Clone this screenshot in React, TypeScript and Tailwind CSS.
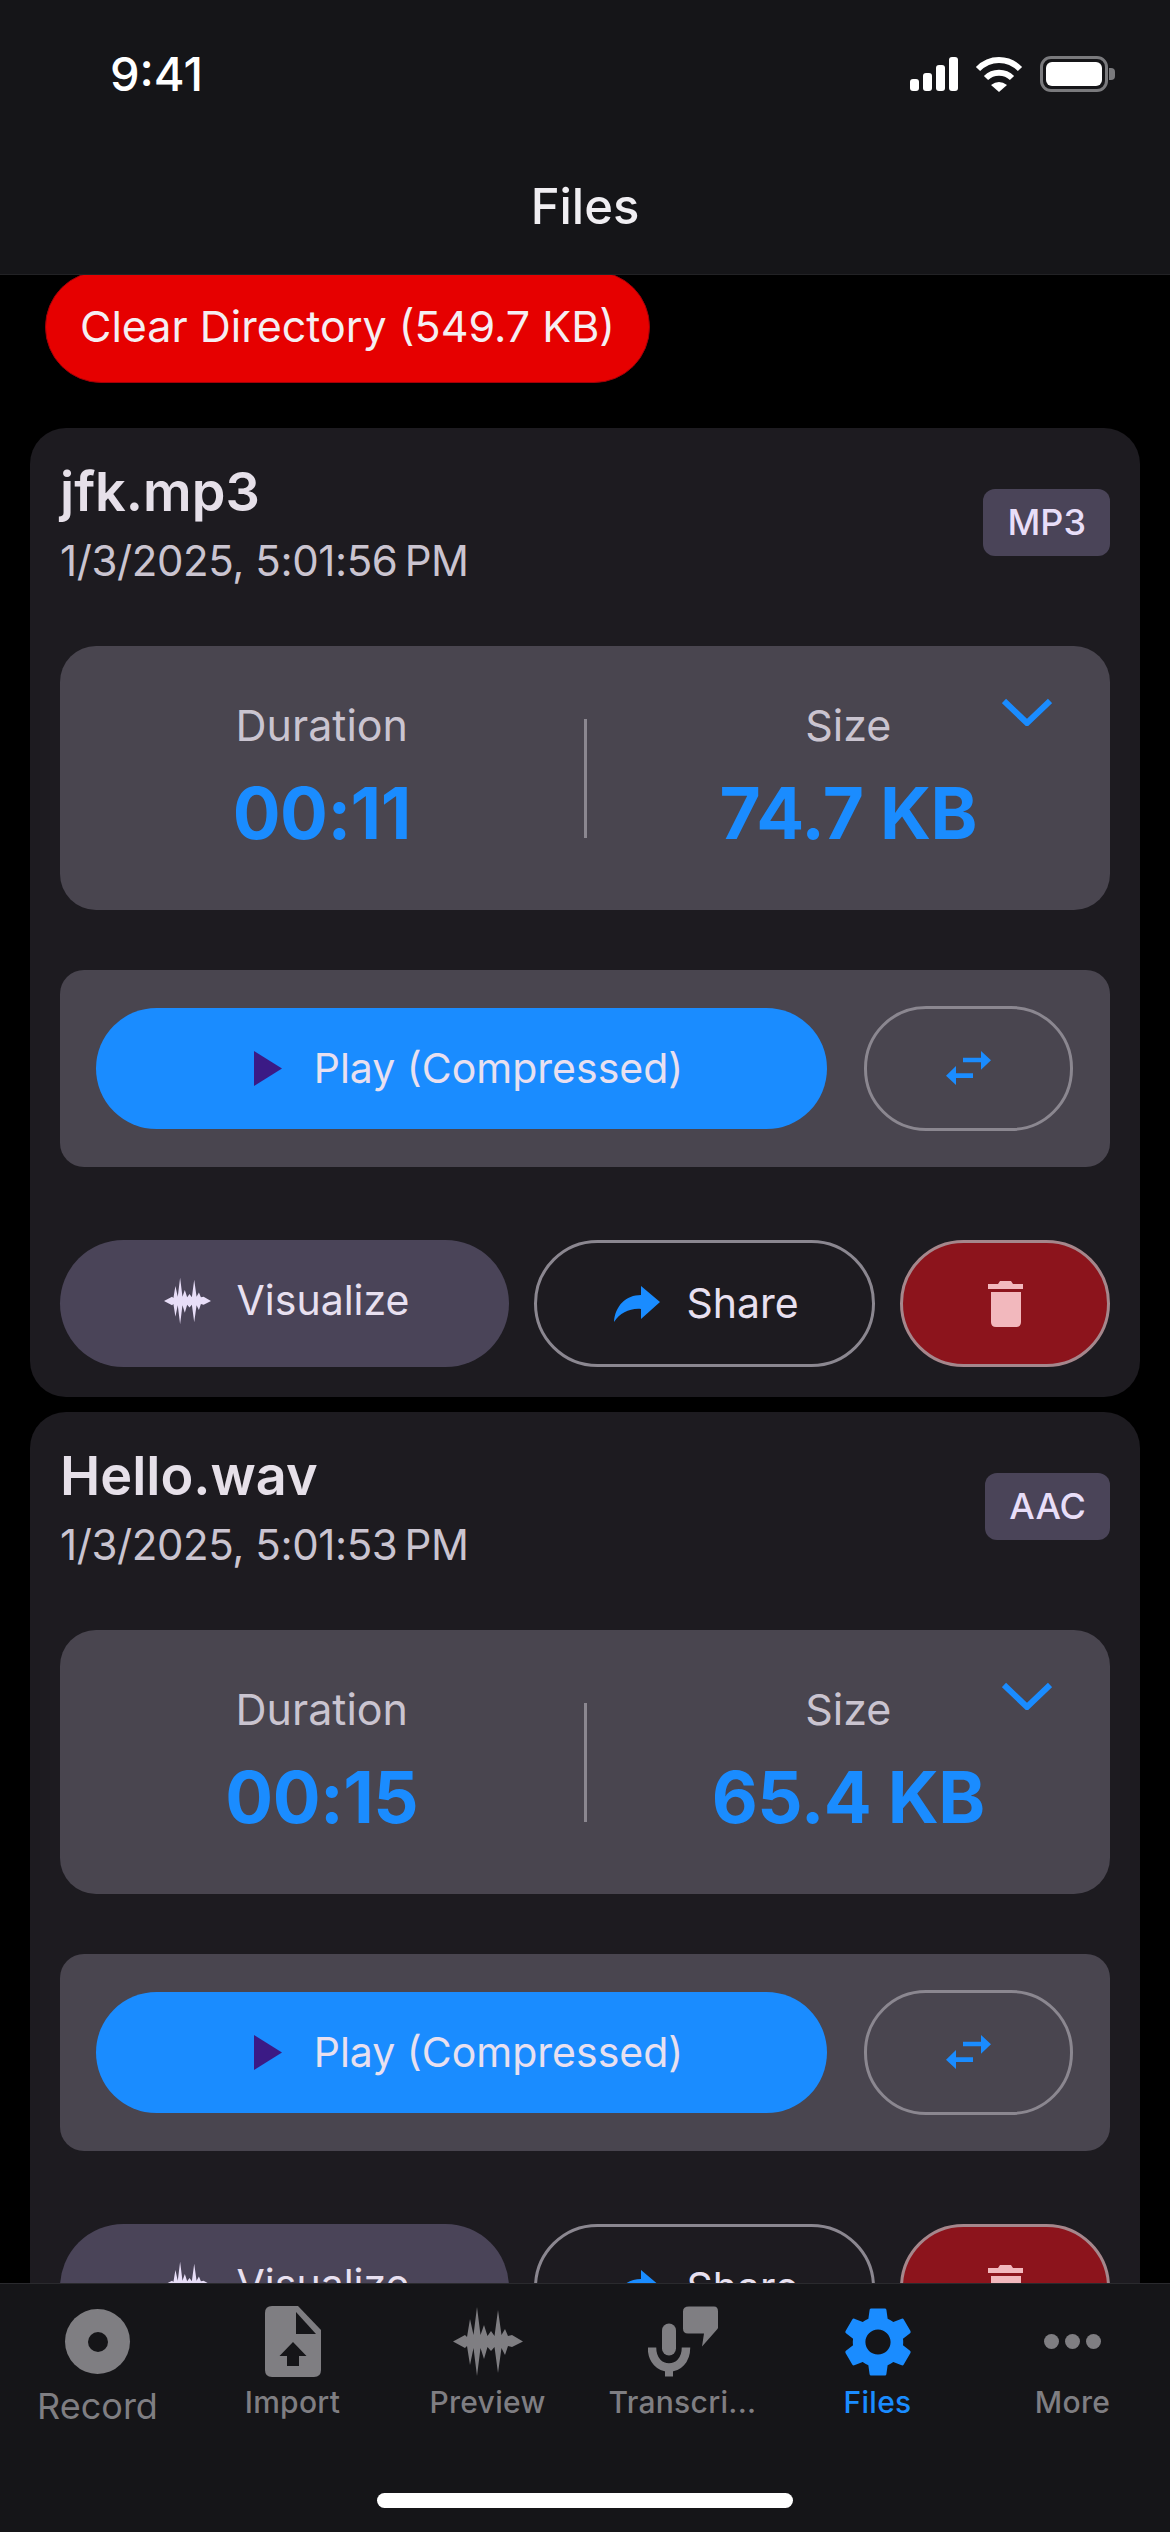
import React from 'react';
import { MdSettings } from 'react-icons/md';

const WAVE_POINTS =
  '0,34.5 12,28 14,30 17,12 20.5,28 24,0 27.5,28 31,18 34.5,29 38,24 41.5,29 45,3 48.5,28 52,22 55,29 59,28 70,34.5 ' +
  '59,40 55,39 52,48 48.5,41 45,66 41.5,40 38,44 34.5,40 31,52 27.5,41 24,69 20.5,41 17,58 14,39 12,41';

const WaveIcon = ({ className }: { className: string }) => (
  <svg viewBox="0 0 70 69" className={className} fill="currentColor">
    <polygon points={WAVE_POINTS} />
  </svg>
);

const StatusIcons = () => (
  <div className="flex items-center">
    <div className="flex items-end gap-[4px] h-[34px]">
      <span className="w-[9px] h-[12px] rounded-[3px] bg-white" />
      <span className="w-[9px] h-[18px] rounded-[3px] bg-white" />
      <span className="w-[9px] h-[26px] rounded-[3px] bg-white" />
      <span className="w-[9px] h-[34px] rounded-[3px] bg-white" />
    </div>
    <svg viewBox="0 0 48 36" className="w-[48px] h-[36px] ml-[17px]" fill="none" stroke="white" strokeWidth="6">
      <path d="M3 13 C15 1 33 1 45 13" />
      <path d="M11 22 C18 15 30 15 37 22" />
      <path d="M16 29 Q24 23 32 29 L24 36 Z" fill="white" stroke="none" />
    </svg>
    <div className="ml-[17px] w-[68px] h-[36px] rounded-[11px] border-[3px] border-[#7a7a7d] p-[3px]">
      <div className="w-full h-full rounded-[6px] bg-white" />
    </div>
    <div className="w-[6px] h-[12px] ml-[1px] rounded-r-[4px] bg-[#7a7a7d]" />
  </div>
);

const FileCard = ({ name, date, badge, duration, size }: { name: string; date: string; badge: string; duration: string; size: string }) => (
  <div className="mx-[30px] mb-[15px] shrink-0 rounded-[36px] bg-[#1d1b20] p-[30px]">
    <div className="flex items-center justify-between h-[128px]">
      <div>
        <div className="text-[54px] leading-[66px] font-semibold text-[#e6e0e9]">{name}</div>
        <div className="mt-[11px] text-[42px] leading-[50px] tracking-[-0.4px] text-[#cac4d0]">{date}</div>
      </div>
      <div className="rounded-[12px] bg-[#4a4458] h-[67px] px-[24px] flex items-center text-[36px] font-medium text-[#e8def8]">{badge}</div>
    </div>

    <div className="relative mt-[60px] h-[264px] rounded-[36px] bg-[#49454f] flex items-center">
      <div className="flex-1 text-center">
        <div className="mt-[-2px] text-[43px] leading-[50px] text-[#cac4d0]">Duration</div>
        <div className="mt-[21px] text-[71px] leading-[84px] tracking-[-0.5px] font-bold text-[#1a8cff]">{duration}</div>
      </div>
      <div className="w-[3px] h-[119px] bg-[#8b8790]" />
      <div className="flex-1 text-center">
        <div className="mt-[-2px] text-[43px] leading-[50px] text-[#cac4d0]">Size</div>
        <div className="mt-[21px] text-[71px] leading-[84px] tracking-[-0.5px] font-bold text-[#1a8cff]">{size}</div>
      </div>
      <svg viewBox="0 0 50 28" className="absolute right-[58px] top-[52px] w-[50px] h-[28px]" fill="none" stroke="#1a8cff" strokeWidth="6">
        <path d="M2 3 L25 25 L48 3" />
      </svg>
    </div>

    <div className="mt-[60px] h-[197px] rounded-[24px] bg-[#49454f] flex items-center gap-[37px] pl-[36px] pr-[37px]">
      <div className="flex-1 h-[121px] rounded-full bg-[#1a8cff] flex items-center justify-center gap-[32px] pl-[14px]">
        <svg viewBox="0 0 28 35" className="w-[28px] h-[35px]" fill="#3b1a85">
          <polygon points="0,0 28,17.5 0,35" />
        </svg>
        <span className="text-[41px] text-[#e8e0f0]">Play (Compressed)</span>
      </div>
      <div className="w-[209px] h-[125px] rounded-[62px] border-[3px] border-[#8b8790] flex items-center justify-center">
        <svg viewBox="0 0 45 35" className="w-[45px] h-[35px]" fill="#1a8cff">
          <polygon points="17,6.7 35,6.7 35,0 45,9.3 35,18.7 35,11.3 17,11.3" />
          <polygon points="27,22.3 10,22.3 10,15 0,24.7 10,34 10,27 27,27" />
        </svg>
      </div>
    </div>

    <div className="mt-[73px] h-[127px] flex gap-[25px]">
      <div className="w-[449px] rounded-full bg-[#4a4458] flex items-center justify-center gap-[26px] pb-[6px] pl-[4px]">
        <WaveIcon className="w-[47px] h-[48px] text-[#e8def8]" />
        <span className="text-[41px] text-[#e8e0f0]">Visualize</span>
      </div>
      <div className="w-[341px] rounded-full border-[3px] border-[#8b8790] flex items-center justify-center gap-[26px] pl-[4px]">
        <svg viewBox="0 0 46 36" className="w-[46px] h-[36px]" fill="#1a8cff">
          <path d="M27 0 L46 16 L27 33 L27 23 C16 22 6 27 0 36 C1 20 12 9 27 9 Z" />
        </svg>
        <span className="text-[41px] text-[#e8e0f0]">Share</span>
      </div>
      <div className="flex-1 rounded-full border-[3px] border-[#a5878c] bg-[#8c141c] flex items-center justify-center">
        <svg viewBox="0 0 35 46" className="w-[35px] h-[46px]" fill="#f2b8bd">
          <path d="M0 3 H10 L12 0 H23 L25 3 H35 V8 H0 Z" />
          <path d="M3 11 H33 V41 Q33 46 28 46 H8 Q3 46 3 41 Z" />
        </svg>
      </div>
    </div>
  </div>
);

const tabLabel = 'mt-[7px] text-[30px] leading-[36px] font-medium tracking-[0.3px] text-[#7f7e82]';

const TabBar = () => (
  <div className="h-[249px] shrink-0 border-t border-[#2a2a2e] bg-[#151518] flex flex-col">
    <div className="flex pt-[22px]">
      <div className="w-[195px] flex flex-col items-center">
        <div className="h-[71px] flex items-center">
          <div className="w-[65px] h-[65px] rounded-full bg-[#7f7e82] flex items-center justify-center">
            <div className="w-[20px] h-[20px] rounded-full bg-[#151518]" />
          </div>
        </div>
        <span className="mt-[9px] text-[36px] leading-[40px] text-[#7f7e82]">Record</span>
      </div>
      <div className="w-[195px] flex flex-col items-center">
        <svg viewBox="0 0 56 71" className="w-[56px] h-[71px]">
          <path d="M7 0 H33 L56 24 V64 Q56 71 49 71 H7 Q0 71 0 64 V7 Q0 0 7 0 Z" fill="#7f7e82" />
          <polygon points="31,6 31,28 51,28" fill="#151518" />
          <polygon points="28,36 41.5,50 34,50 34,60 22,60 22,50 14.5,50" fill="#151518" />
        </svg>
        <span className={tabLabel}>Import</span>
      </div>
      <div className="w-[195px] flex flex-col items-center">
        <div className="h-[71px] flex items-center">
          <WaveIcon className="w-[70px] h-[69px] text-[#7f7e82]" />
        </div>
        <span className={tabLabel}>Preview</span>
      </div>
      <div className="w-[195px] flex flex-col items-center">
        <svg viewBox="0 0 70 70" className="w-[70px] h-[71px]" fill="#7f7e82">
          <rect x="14" y="17" width="14" height="32" rx="7" />
          <path d="M4 41 C4 54 12 61 21 61 C30 61 38 54 38 41" fill="none" stroke="#7f7e82" strokeWidth="8.5" />
          <rect x="17" y="60" width="8" height="10" />
          <path d="M41 0 H66 Q70 0 70 5 V21 Q70 22 69 23 L54 40 L56 27 H40 Q35 27 35 22 V5 Q35 0 41 0 Z" />
        </svg>
        <span className={tabLabel}>Transcri...</span>
      </div>
      <div className="w-[195px] flex flex-col items-center">
        <div className="h-[71px] flex items-center">
          <MdSettings className="w-[84px] h-[84px] text-[#1a8cff]" />
        </div>
        <span className="mt-[7px] text-[30px] leading-[36px] font-medium tracking-[0.3px] text-[#1a8cff]">Files</span>
      </div>
      <div className="w-[195px] flex flex-col items-center">
        <div className="h-[71px] flex items-center gap-[6px]">
          <span className="w-[15px] h-[15px] rounded-full bg-[#7f7e82]" />
          <span className="w-[15px] h-[15px] rounded-full bg-[#7f7e82]" />
          <span className="w-[15px] h-[15px] rounded-full bg-[#7f7e82]" />
        </div>
        <span className={tabLabel}>More</span>
      </div>
    </div>
    <div className="mt-auto mb-[24px] mx-auto w-[416px] h-[15px] rounded-full bg-white" />
  </div>
);

export default function App() {
  return (
    <div className="w-[1170px] h-[2532px] flex flex-col overflow-hidden bg-black [font-family:Inter,sans-serif]">
      <div className="relative z-10 h-[275px] shrink-0 bg-[#151518] border-b border-[#222225]">
        <div className="h-[140px] flex items-center justify-between pl-[110px] pr-[55px] pt-[8px]">
          <span className="text-[47px] font-medium text-white">9:41</span>
          <StatusIcons />
        </div>
        <div className="h-[134px] flex items-center justify-center text-[49px] font-medium text-[#f0eef2]">Files</div>
      </div>

      <div className="flex-1 min-h-0 overflow-hidden flex flex-col">
        <div className="ml-[45px] mt-[-4px] mb-[45px] w-[605px] h-[112px] shrink-0 rounded-full border border-[#a00008] bg-[#e60000] flex items-center justify-center pb-[2px] text-[43px] text-[#f5eef2]">
          Clear Directory (549.7 KB)
        </div>
        <FileCard name="jfk.mp3" date={'1/3/2025, 5:01:56\u202fPM'} badge="MP3" duration="00:11" size="74.7 KB" />
        <FileCard name="Hello.wav" date={'1/3/2025, 5:01:53\u202fPM'} badge="AAC" duration="00:15" size="65.4 KB" />
      </div>

      <TabBar />
    </div>
  );
}
